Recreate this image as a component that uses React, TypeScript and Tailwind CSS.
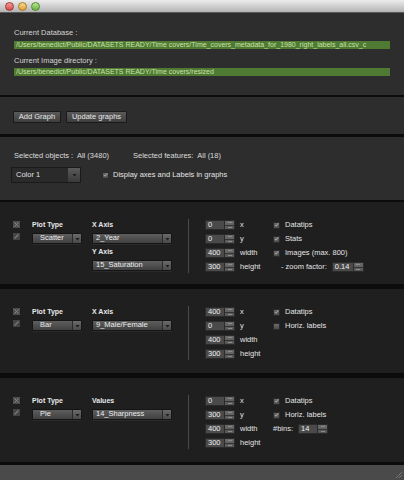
import { FC, ReactNode } from 'react';

const font = { fontFamily: '"Liberation Sans", Arial, sans-serif' };

const Select: FC<{ label: string; w: string; pad?: string }> = ({ label, w, pad = 'pl-[7px]' }) => (
  <div
    className={`${w} flex h-[11px] rounded-[1px] border border-[#151515] bg-gradient-to-b from-[#5e5e5e] to-[#404040] shadow-[0_1px_0_#2a2a2a]`}
  >
    <div className={`flex-1 whitespace-nowrap ${pad} text-[7.5px] leading-[8px] text-[#ececec]`}>{label}</div>
    <div className="flex w-[9px] items-center justify-center border-l border-[#2a2a2a] bg-gradient-to-b from-[#6a6a6a] to-[#4a4a4a]">
      <svg width="5" height="4" viewBox="0 0 5 4">
        <path d="M0.5 1 L4.5 1 L2.5 3.5 Z" fill="#1c1c1c" />
      </svg>
    </div>
  </div>
);

const NumberField: FC<{ value: string; w?: string }> = ({ value, w = 'w-[20px]' }) => (
  <div className="flex h-[10px]">
    <div className={`${w} border border-[#2a2a2a] bg-[#4a4a4a] pl-[2px] text-[7.5px] leading-[8px] text-[#efefef]`}>
      {value}
    </div>
    <div className="flex w-[10px] flex-col border border-l-0 border-[#2a2a2a] bg-gradient-to-b from-[#6b6b6b] to-[#555555]">
      <div className="flex flex-1 items-center justify-center border-b border-[#333]">
        <div className="h-px w-[4px] bg-[#8a8a8a]" />
      </div>
      <div className="flex flex-1 items-center justify-center">
        <div className="h-px w-[4px] bg-[#8a8a8a]" />
      </div>
    </div>
  </div>
);

const Check: FC<{ checked?: boolean }> = ({ checked = true }) => (
  <div className="flex h-[7px] w-[7px] items-center justify-center border border-[#2a2a2a] bg-gradient-to-b from-[#6a6a6a] to-[#4c4c4c]">
    {checked && (
      <svg width="6" height="6" viewBox="0 0 6 6">
        <path d="M1 3 L2.5 4.5 L5 1" stroke="#b8b8b8" strokeWidth="1" fill="none" />
      </svg>
    )}
  </div>
);

const Option: FC<{ children: ReactNode; checked?: boolean }> = ({ children, checked }) => (
  <div className="flex h-[14px] items-center gap-[5px]">
    <Check checked={checked} />
    <span className="text-[7.5px] text-[#e4e4e4]">{children}</span>
  </div>
);

const SideIcons: FC = () => (
  <div className="flex w-[19px] flex-col gap-[5px] pt-[3px]">
    <div className="flex h-[7px] w-[7px] items-center justify-center bg-[#4e4e4e]">
      <svg width="7" height="7" viewBox="0 0 7 7">
        <path d="M1.5 1.5 L5.5 5.5 M5.5 1.5 L1.5 5.5" stroke="#8a8a8a" strokeWidth="1" />
      </svg>
    </div>
    <div className="flex h-[7px] w-[7px] items-center justify-center bg-[#444]">
      <svg width="7" height="7" viewBox="0 0 7 7">
        <path d="M1.5 5.5 L5.5 1.5" stroke="#7a7a7a" strokeWidth="1.2" />
      </svg>
    </div>
  </div>
);

const Label: FC<{ children: ReactNode }> = ({ children }) => (
  <div className="h-[10px] text-[7px] leading-[10px] font-bold text-[#e8e8e8]">{children}</div>
);

interface GraphProps {
  plotType: string;
  axes: { label: string; value: string }[];
  fields: string[];
  options: ReactNode;
  height: string;
}

const GraphPanel: FC<GraphProps> = ({ plotType, axes, fields, options, height }) => {
  const dims = ['x', 'y', 'width', 'height'];
  return (
    <div className={`${height} flex bg-[#1f1f1f] pl-[13px] pt-[16px]`}>
      <SideIcons />
      <div className="flex w-[60px] flex-col pt-[2px]">
        <Label>Plot Type</Label>
        <div className="mt-[3px]">
          <Select label={plotType} w="w-[50px]" />
        </div>
      </div>
      <div className="flex w-[96px] flex-col pt-[2px]">
        {axes.map((a, i) => (
          <div key={a.label} className={i > 0 ? 'mt-[3px]' : ''}>
            <Label>{a.label}</Label>
            <div className="mt-[3px]">
              <Select label={a.value} w="w-[80px]" pad="pl-[3px]" />
            </div>
          </div>
        ))}
      </div>
      <div className="mt-[1px] h-[54px] w-px bg-[#4a4a4a]" />
      <div className="ml-[16px] flex w-[68px] flex-col">
        {fields.map((f, i) => (
          <div key={i} className="flex h-[14px] items-center gap-[5px]">
            <NumberField value={f} />
            <span className="text-[7.5px] text-[#e4e4e4]">{dims[i]}</span>
          </div>
        ))}
      </div>
      <div className="flex flex-col">{options}</div>
    </div>
  );
};

const Sep: FC<{ h: string }> = ({ h }) => <div className={`${h} bg-[#0c0c0c]`} />;

const App: FC = () => {
  return (
    <div className="flex h-[480px] w-[404px] flex-col overflow-hidden bg-[#2d2d2d]" style={font}>
      {/* title bar */}
      <div className="flex h-[13px] items-center gap-[4px] border-b border-[#5a5a5a] bg-gradient-to-b from-[#ececec] to-[#b4b4b4] pl-[5px]">
        <div className="h-[9px] w-[9px] rounded-full border border-[#9a3a3a] bg-gradient-to-b from-[#f59a9a] to-[#d8474a]" />
        <div className="h-[9px] w-[9px] rounded-full border border-[#a07a2a] bg-gradient-to-b from-[#f8d98a] to-[#e0a030]" />
        <div className="h-[9px] w-[9px] rounded-full border border-[#4e8a30] bg-gradient-to-b from-[#b8e890] to-[#6cb040]" />
      </div>

      <div className="flex h-[82px] flex-col px-[14px] pt-[15px]">
        <div className="h-[10px] text-[7.5px] leading-[10px] text-[#d4d4d4]">Current Database :</div>
        <div className="mt-[3px] h-[8px] w-[376px] truncate bg-[#4f7a33] pl-[2px] text-[7px] leading-[8px] text-[#c9e2a6]">
          /Users/benedict/Public/DATASETS READY/Time covers/Time_covers_metadata_for_1980_right_labels_all.csv_c
        </div>
        <div className="mt-[7px] h-[10px] text-[7.5px] leading-[10px] text-[#d4d4d4]">Current Image directory :</div>
        <div className="mt-[2px] h-[8px] w-[376px] truncate bg-[#4f7a33] pl-[2px] text-[7px] leading-[8px] text-[#c9e2a6]">
          /Users/benedict/Public/DATASETS READY/Time covers/resized
        </div>
      </div>
      <Sep h="h-[2px]" />

      <div className="flex h-[37px] gap-[5px] px-[13px] pt-[14px]">
        <button className="h-[12px] w-[48px] rounded-[1px] border border-[#1a1a1a] bg-gradient-to-b from-[#5a5a5a] to-[#3e3e3e] text-[7.5px] leading-[10px] text-[#e8e8e8]">
          Add Graph
        </button>
        <button className="h-[12px] w-[61px] rounded-[1px] border border-[#1a1a1a] bg-gradient-to-b from-[#5a5a5a] to-[#3e3e3e] text-[7.5px] leading-[10px] text-[#e8e8e8]">
          Update graphs
        </button>
      </div>
      <Sep h="h-[3px]" />

      <div className="flex h-[63px] flex-col px-[14px] pt-[14px]">
        <div className="flex h-[10px] text-[7.5px] leading-[10px] text-[#dcdcdc]">
          <span className="w-[119px] whitespace-pre">Selected objects :  All (3480)</span>
          <span className="whitespace-pre">Selected features:  All (18)</span>
        </div>
        <div className="mt-[6px] flex items-center">
          <div className="-ml-[3px] flex h-[16px] w-[70px] border border-[#1a1a1a] bg-[#2a2a2a]">
            <div className="flex-1 pl-[4px] text-[7.5px] leading-[14px] text-[#e0e0e0]">Color 1</div>
            <div className="flex w-[12px] items-center justify-center bg-gradient-to-b from-[#5a5a5a] to-[#3a3a3a]">
              <svg width="5" height="4" viewBox="0 0 5 4">
                <path d="M0.5 1 L4.5 1 L2.5 3.5 Z" fill="#1c1c1c" />
              </svg>
            </div>
          </div>
          <div className="ml-[21px] flex items-center gap-[4px]">
            <Check />
            <span className="text-[7.5px] text-[#e4e4e4]">Display axes and Labels in graphs</span>
          </div>
        </div>
      </div>
      <Sep h="h-[2px]" />

      <GraphPanel
        height="h-[82px]"
        plotType="Scatter"
        axes={[
          { label: 'X Axis', value: '2_Year' },
          { label: 'Y Axis', value: '15_Saturation' },
        ]}
        fields={['0', '0', '400', '300']}
        options={
          <>
            <Option>Datatips</Option>
            <Option>Stats</Option>
            <Option>Images (max. 800)</Option>
            <div className="flex h-[14px] items-center gap-[5px] pl-[8px]">
              <span className="text-[7.5px] text-[#e4e4e4]">- zoom factor:</span>
              <NumberField value="0.14" w="w-[22px]" />
            </div>
          </>
        }
      />
      <Sep h="h-[5px]" />

      <GraphPanel
        height="h-[84px]"
        plotType="Bar"
        axes={[{ label: 'X Axis', value: '9_Male/Female' }]}
        fields={['400', '0', '400', '300']}
        options={
          <>
            <Option>Datatips</Option>
            <Option checked={false}>Horiz. labels</Option>
          </>
        }
      />
      <Sep h="h-[5px]" />

      <GraphPanel
        height="h-[84px]"
        plotType="Pie"
        axes={[{ label: 'Values', value: '14_Sharpness' }]}
        fields={['0', '300', '400', '300']}
        options={
          <>
            <Option>Datatips</Option>
            <Option>Horiz. labels</Option>
            <div className="flex h-[14px] items-center gap-[5px]">
              <span className="text-[7.5px] text-[#e4e4e4]">#bins:</span>
              <NumberField value="14" />
            </div>
          </>
        }
      />
      <Sep h="h-[3px]" />

      <div className="flex flex-1 items-end justify-end bg-[#4a4a4a] pb-[1px] pr-[1px]">
        <svg width="10" height="10" viewBox="0 0 10 10">
          <path d="M9 3 L3 9 M9 6 L6 9" stroke="#777" strokeWidth="1" />
        </svg>
      </div>
    </div>
  );
};

export default App;
